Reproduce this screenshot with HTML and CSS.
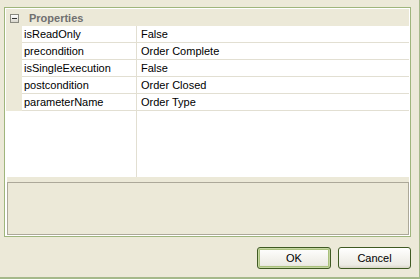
FILE: index.html
```html
<!DOCTYPE html>
<html>
<head>
<meta charset="utf-8">
<link rel="stylesheet" href="styles.css">
</head>
<body>
<div class="window">
  <div class="panel">
    <div class="grid">
      <div class="cat">
        <span class="toggle"><span class="minus"></span></span>
        <span class="cat-title">Properties</span>
      </div>
      <div class="row"><div class="gut"></div><div class="name">isReadOnly</div><div class="val">False</div></div>
      <div class="row"><div class="gut"></div><div class="name">precondition</div><div class="val">Order Complete</div></div>
      <div class="row"><div class="gut"></div><div class="name">isSingleExecution</div><div class="val">False</div></div>
      <div class="row"><div class="gut"></div><div class="name">postcondition</div><div class="val">Order Closed</div></div>
      <div class="row"><div class="gut"></div><div class="name">parameterName</div><div class="val">Order Type</div></div>
      <div class="filler"><div class="fill-left"></div><div class="fill-right"></div></div>
    </div>
    <div class="splitter"></div>
    <div class="desc"></div>
  </div>
  <div class="buttons">
    <button class="btn default">OK</button>
    <button class="btn">Cancel</button>
  </div>
</div>
</body>
</html>
```
FILE: styles.css
```css
html, body {
  margin: 0;
  padding: 0;
}
body {
  width: 420px;
  height: 279px;
  background: #ECE9D8;
  font-family: "Liberation Sans", Arial, sans-serif;
  font-size: 11px;
  color: #000;
  overflow: hidden;
}
.window {
  box-sizing: border-box;
  width: 420px;
  height: 279px;
  border-right: 1px solid #a5b98a;
  border-bottom: 2px solid #a5b98a;
  padding: 7px 8px 0 4px;
  display: flex;
  flex-direction: column;
}
.panel {
  box-sizing: border-box;
  width: 407px;
  height: 230px;
  border: 1px solid #9fb57c;
  background: #fff;
  padding: 1px;
  display: flex;
  flex-direction: column;
}
.grid {
  flex: 1;
  display: flex;
  flex-direction: column;
  background: #fff;
}
.cat {
  height: 17px;
  background: #ECE9D8;
  display: flex;
  align-items: center;
  padding-left: 4px;
}
.toggle {
  box-sizing: border-box;
  width: 9px;
  height: 9px;
  border: 1px solid #8a8a80;
  background: linear-gradient(#ffffff, #d8d6cc);
  display: flex;
  align-items: center;
  justify-content: center;
  margin-top: 1px;
}
.minus {
  width: 5px;
  height: 1px;
  background: #333;
}
.cat-title {
  margin-left: 10px;
  font-weight: bold;
  color: #707070;
}
.row {
  display: flex;
  height: 17px;
}
.gut {
  width: 16px;
  background: #ECE9D8;
}
.name {
  box-sizing: border-box;
  width: 115px;
  padding-left: 2px;
  border-right: 1px solid #e2dfd2;
  border-bottom: 1px solid #e2dfd2;
  line-height: 16px;
  white-space: nowrap;
}
.val {
  flex: 1;
  padding-left: 4px;
  border-bottom: 1px solid #e2dfd2;
  line-height: 16px;
  white-space: nowrap;
}
.filler {
  flex: 1;
  display: flex;
}
.fill-left {
  box-sizing: border-box;
  width: 131px;
  border-right: 1px solid #e2dfd2;
}
.fill-right {
  flex: 1;
}
.splitter {
  height: 5px;
  margin-left: 1px;
  background: #ECE9D8;
}
.desc {
  box-sizing: border-box;
  height: 53px;
  margin-left: 1px;
  border: 1px solid #aca899;
  background: #ECE9D8;
}
.buttons {
  display: flex;
  justify-content: flex-end;
  gap: 7px;
  margin-top: 10px;
}
.btn {
  box-sizing: border-box;
  height: 22px;
  width: 73px;
  margin: 0;
  padding: 0;
  border: 1px solid #3f5a22;
  border-radius: 3px;
  background: linear-gradient(#ffffff 0%, #f4f3ee 50%, #ecebe4 85%, #d8d4c6 100%);
  font-family: "Liberation Sans", Arial, sans-serif;
  font-size: 11px;
  color: #000;
}
.btn.default {
  width: 74px;
  box-shadow: inset 0 0 0 1px #c5d6a1, inset 0 0 0 2px #a9c07c;
}
```
